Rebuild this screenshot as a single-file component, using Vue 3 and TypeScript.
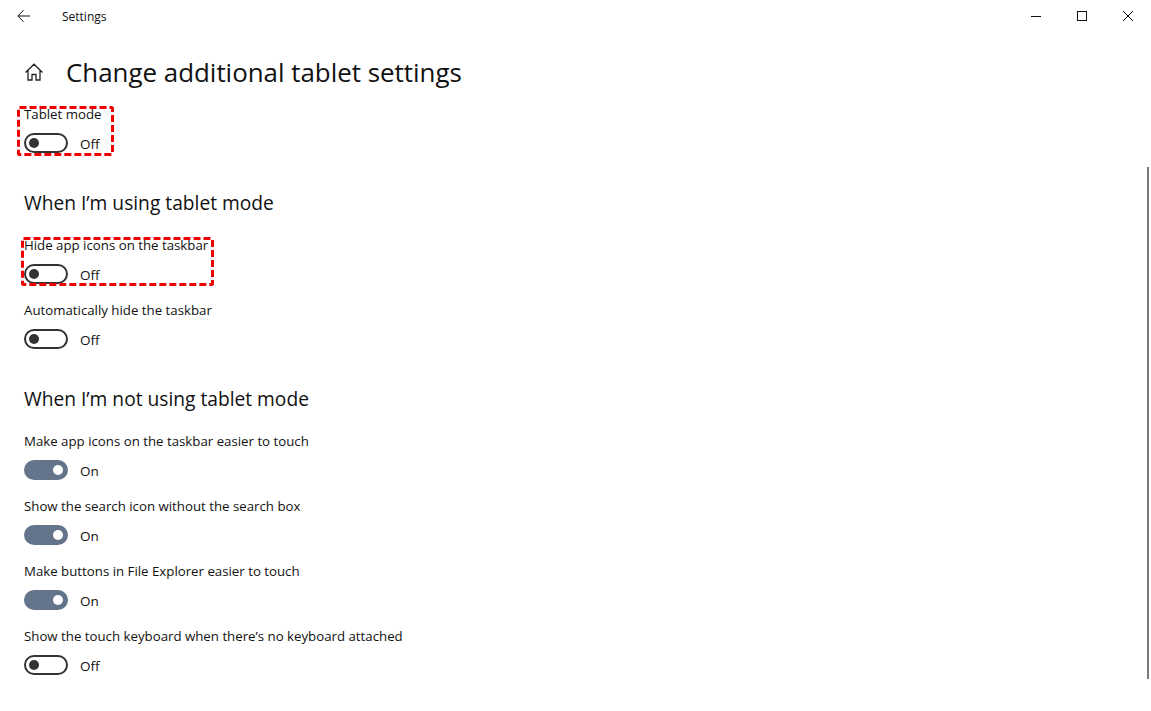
<template>
  <div class="window">
    <header class="titlebar">
      <div class="title-left">
        <button class="back" aria-label="Back">
          <svg width="16" height="16" viewBox="0 0 16 16" fill="none" stroke="#111" stroke-width="1">
            <path d="M2 8H14M7.5 2.2L1.8 8L7.5 13.8" />
          </svg>
        </button>
        <span class="app-name">Settings</span>
      </div>
      <div class="controls">
        <button class="ctrl" aria-label="Minimize">
          <svg width="12" height="12" viewBox="0 0 12 12" stroke="#111" fill="none"><path d="M1 6.5H11" /></svg>
        </button>
        <button class="ctrl" aria-label="Maximize">
          <svg width="12" height="12" viewBox="0 0 12 12" stroke="#111" fill="none"><rect x="1.5" y="1.5" width="9" height="9" /></svg>
        </button>
        <button class="ctrl" aria-label="Close">
          <svg width="12" height="12" viewBox="0 0 12 12" stroke="#111" fill="none"><path d="M1 1L11 11M11 1L1 11" /></svg>
        </button>
      </div>
    </header>

    <main class="content">
      <div class="page-head">
        <svg class="home" width="20" height="20" viewBox="0 0 20 20" fill="none" stroke="#222" stroke-width="1.3">
          <path d="M1.5 10.5L10 2.2L18.5 10.5M4 8.5V18H8V12.5H12V18H16V8.5" />
        </svg>
        <h1>Change additional tablet settings</h1>
      </div>

      <section v-for="group in groups" :key="group.title" class="group">
        <h2 v-if="group.title !== 'top'">{{ group.title }}</h2>
        <div v-for="item in group.items" :key="item.label" class="setting">
          <div class="label">{{ item.label }}</div>
          <div class="toggle-row">
            <span class="toggle" :class="{ on: item.on }"><span class="knob"></span></span>
            <span class="state">{{ item.on ? 'On' : 'Off' }}</span>
          </div>
        </div>
      </section>
    </main>

    <svg class="mark mark-one" width="97" height="50">
      <rect x="1.5" y="1.5" width="94" height="47" rx="1" />
    </svg>
    <svg class="mark mark-two" width="193" height="49">
      <rect x="1.5" y="1.5" width="190" height="46" rx="1" />
    </svg>
    <div class="scrollbar"></div>
  </div>
</template>

<script setup lang="ts">
interface Item {
  label: string;
  on: boolean;
}

const groups: { title: string; items: Item[] }[] = [
  { title: 'top', items: [{ label: 'Tablet mode', on: false }] },
  {
    title: 'When I’m using tablet mode',
    items: [
      { label: 'Hide app icons on the taskbar', on: false },
      { label: 'Automatically hide the taskbar', on: false }
    ]
  },
  {
    title: 'When I’m not using tablet mode',
    items: [
      { label: 'Make app icons on the taskbar easier to touch', on: true },
      { label: 'Show the search icon without the search box', on: true },
      { label: 'Make buttons in File Explorer easier to touch', on: true },
      { label: 'Show the touch keyboard when there’s no keyboard attached', on: false }
    ]
  }
];
</script>

<style>
html,
body {
  margin: 0;
  background: #fff;
  overflow: hidden;
}
</style>

<style scoped>
.window {
  position: relative;
  width: 1151px;
  height: 711px;
  overflow: hidden;
  background: #fff;
  color: #111;
  font-family: "Open Sans", "Noto Sans", sans-serif;
}

.titlebar {
  display: flex;
  justify-content: space-between;
  align-items: center;
  height: 32px;
}

.title-left {
  display: flex;
  align-items: center;
}

button {
  border: none;
  background: none;
  padding: 0;
  display: flex;
  align-items: center;
  justify-content: center;
}

.back {
  width: 48px;
  height: 32px;
}

.app-name {
  margin-left: 14px;
  font-size: 12px;
}

.controls {
  display: flex;
}

.ctrl {
  width: 46px;
  height: 32px;
}

.content {
  padding: 0 24px;
}

.page-head {
  box-sizing: border-box;
  display: flex;
  align-items: center;
  height: 73px;
  padding-top: 7px;
}

.home {
  margin-right: 22px;
}

h1 {
  margin: 0;
  font-size: 25.9px;
  font-weight: 400;
}

.group {
  margin-bottom: 20px;
}

h2 {
  margin: 0 0 20px;
  font-size: 19.2px;
  line-height: 26px;
  font-weight: 400;
}

.setting {
  height: 65px;
}

.label {
  font-size: 13.25px;
  line-height: 18px;
}

.toggle-row {
  display: flex;
  align-items: center;
  margin-top: 10px;
  height: 20px;
}

.toggle {
  box-sizing: border-box;
  display: flex;
  align-items: center;
  width: 44px;
  height: 20px;
  padding: 0 3px;
  border: 2px solid #333;
  border-radius: 10px;
}

.knob {
  width: 10px;
  height: 10px;
  border-radius: 50%;
  background: #333;
}

.toggle.on {
  justify-content: flex-end;
  background: #64748b;
  border-color: #64748b;
}

.toggle.on .knob {
  background: #fff;
}

.state {
  margin: 2px 0 0 12px;
  font-size: 13.5px;
}

.mark {
  position: absolute;
  fill: none;
  stroke: #f00000;
  stroke-width: 3;
  stroke-dasharray: 7 3;
}

.mark-one {
  left: 17px;
  top: 106px;
}

.mark-two {
  left: 21px;
  top: 237px;
}

.scrollbar {
  position: absolute;
  left: 1147px;
  top: 167px;
  width: 2px;
  height: 512px;
  background: #7a7a7a;
}
</style>
